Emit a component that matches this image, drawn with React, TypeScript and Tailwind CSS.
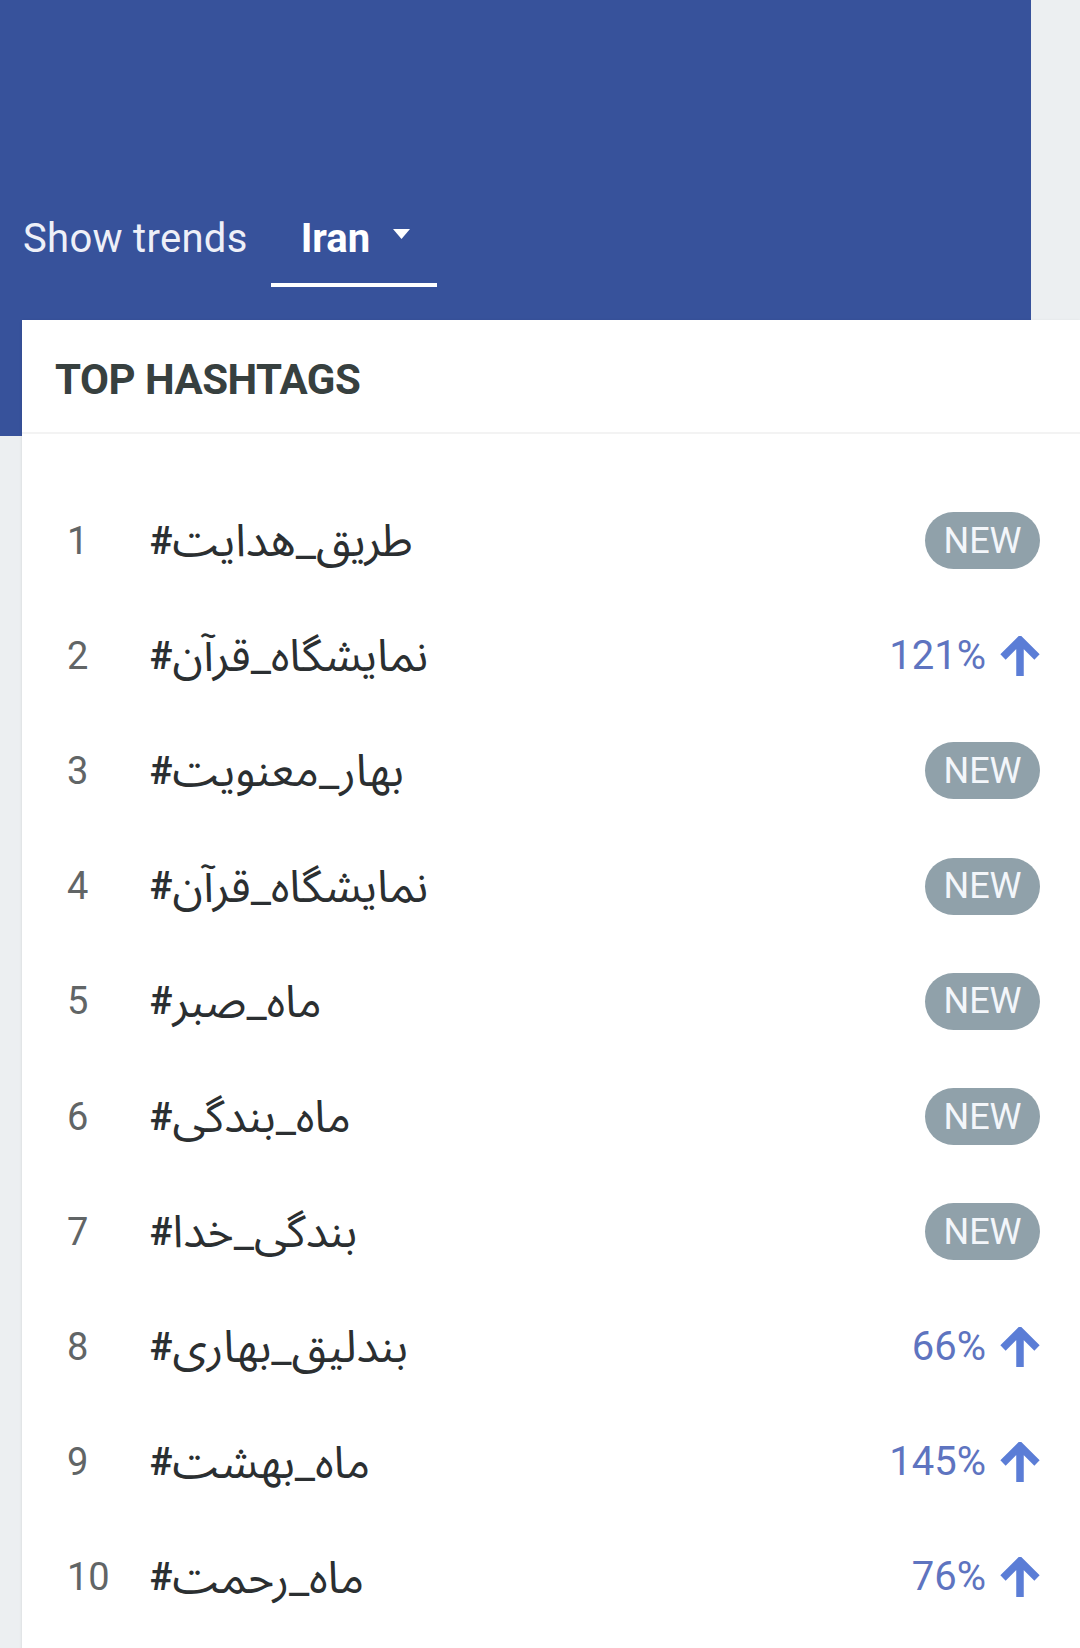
import React from 'react';

type Trend = {
  rank: number;
  tag: string;
  change: string | null;
};

const trends: Trend[] = [
  { rank: 1, tag: 'طریق_هدایت', change: null },
  { rank: 2, tag: 'نمایشگاه_قرآن', change: '121%' },
  { rank: 3, tag: 'بهار_معنویت', change: null },
  { rank: 4, tag: 'نمایشگاه_قرآن', change: null },
  { rank: 5, tag: 'ماه_صبر', change: null },
  { rank: 6, tag: 'ماه_بندگی', change: null },
  { rank: 7, tag: 'بندگی_خدا', change: null },
  { rank: 8, tag: 'بندلیق_بهاری', change: '66%' },
  { rank: 9, tag: 'ماه_بهشت', change: '145%' },
  { rank: 10, tag: 'ماه_رحمت', change: '76%' },
];

const ArrowUp = () => (
  <svg viewBox="0 0 40 40" className="w-[40px] h-[40px]">
    <path
      d="M20 40V6M3 21L20 4l17 17"
      fill="none"
      stroke="#5b7dd6"
      strokeWidth="7.5"
    />
  </svg>
);

const App = () => {
  return (
    <div
      className="min-h-[1648px] bg-[#eceff1] overflow-hidden"
      style={{ fontFamily: 'Roboto, "Noto Sans Arabic", "DejaVu Sans", sans-serif' }}
    >
      {/* Header */}
      <div className="w-[1031px] h-[436px] bg-[#37529b] pt-[195px] pl-[23px]">
        <div className="flex h-[92px] gap-[23px]">
          <div className="flex items-center border-b-4 border-transparent text-[40px] leading-none tracking-[0.3px] text-[#eef0f8]">
            Show trends
          </div>
          <div className="flex items-center border-b-4 border-white pl-[30px] pr-[27px] gap-[23px]">
            <span className="text-[40px] leading-none font-bold text-white">Iran</span>
            <svg viewBox="0 0 17 10" className="w-[17px] h-[10px] fill-white -mt-[10px]">
              <polygon points="0,0 17,0 8.5,10" />
            </svg>
          </div>
        </div>
      </div>

      {/* Card */}
      <div className="ml-[22px] -mt-[116px] w-[1058px] min-h-[1400px] bg-white shadow-sm">
        <div className="h-[114px] flex items-center pl-[33px] pt-[8px] border-b-2 border-[#f3f3f3]">
          <h2 className="text-[42px] leading-none font-bold text-[#37403f] tracking-[-0.5px]">
            TOP HASHTAGS
          </h2>
        </div>

        <div className="pt-[49px]">
          {trends.map((t) => (
            <div key={t.rank} className="h-[115.2px] flex items-center pl-[45px] pr-[40px]">
              <span className="w-[83px] text-[38px] leading-none text-[#616566]">{t.rank}</span>
              <span className="flex items-center text-[38px] leading-none text-[#2b2f31]">
                <span className="font-bold">#</span>
                <span dir="rtl" className="text-[45px]">{t.tag}</span>
              </span>
              <div className="ml-auto flex items-center">
                {t.change ? (
                  <div className="flex items-center gap-[14px]">
                    <span className="text-[40px] leading-none text-[#5e74c0]">{t.change}</span>
                    <ArrowUp />
                  </div>
                ) : (
                  <span className="w-[115px] h-[57px] rounded-full bg-[#90a1aa] flex items-center justify-center text-[36px] leading-none text-[#f3f6fa]">
                    NEW
                  </span>
                )}
              </div>
            </div>
          ))}
        </div>
      </div>
    </div>
  );
};

export default App;
